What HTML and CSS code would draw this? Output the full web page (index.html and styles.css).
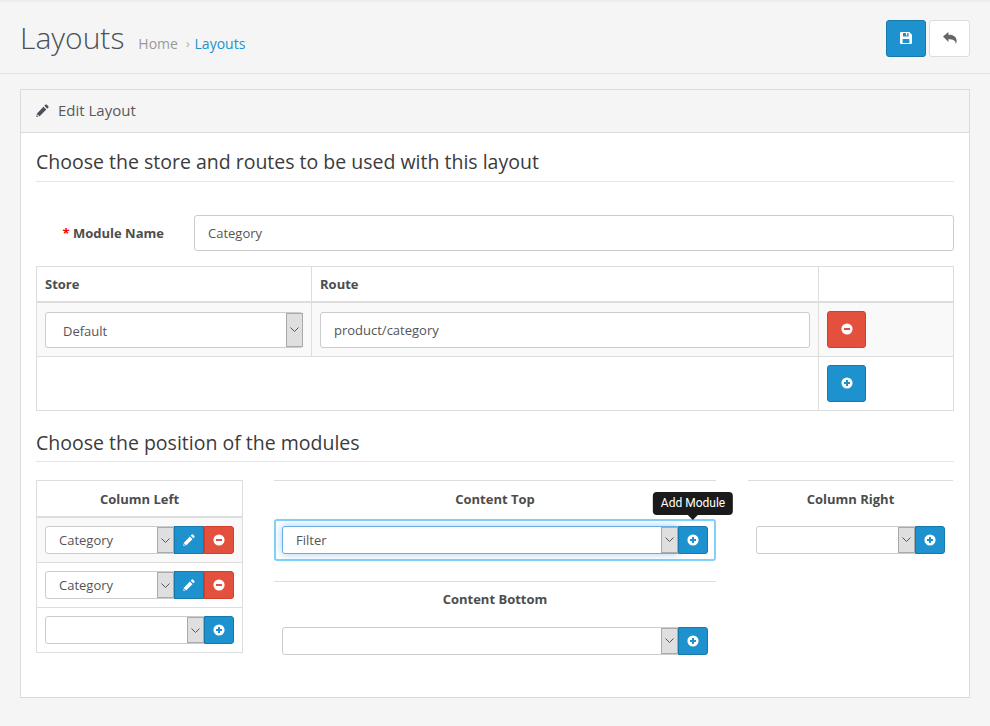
FILE: index.html
```html
<!DOCTYPE html>
<html lang="en">
<head>
    <meta charset="UTF-8">
    <meta name="viewport" content="width=device-width, initial-scale=1.0">
    <title>Layouts</title>
    <link rel="stylesheet" href="styles.css">
</head>
<body>
    <!-- icon set -->
    <svg class="icon-defs" width="0" height="0" aria-hidden="true">
        <symbol id="i-pencil" viewBox="0 0 14 14">
            <path fill-rule="evenodd" d="M10.200.7a1 1 0 0 1 1.400 0l1.700 1.700a1 1 0 0 1 0 1.400l-1.200 1.200-3.100-3.100zM8 2.900l3.100 3.100-7.200 7.200-3.600.8.800-3.700zM1.700 11l-.3 1.600 1 1 1.300-.3-1.100-1.100z"/>
        </symbol>
        <symbol id="i-plus" viewBox="0 0 12 12">
            <path fill-rule="evenodd" d="M6 .4a5.600 5.600 0 1 1 0 11.200A5.600 5.600 0 0 1 6 .4zM5 3v2H3v2h2v2h2V7h2V5H7V3z"/>
        </symbol>
        <symbol id="i-minus" viewBox="0 0 12 12">
            <path fill-rule="evenodd" d="M6 .4a5.600 5.600 0 1 1 0 11.200A5.600 5.600 0 0 1 6 .4zM3 5v2h6V5z"/>
        </symbol>
        <symbol id="i-save" viewBox="0 0 12 12">
            <path fill-rule="evenodd" d="M1 0h8.300L12 2.700V11a1 1 0 0 1-1 1H1a1 1 0 0 1-1-1V1a1 1 0 0 1 1-1zm2 1v3.400h5.600V1H7.200v2.400H6V1zM2.600 7v4h6.800V7z"/>
        </symbol>
        <symbol id="i-reply" viewBox="0 0 14 12">
            <path d="M0 4.600 5.400 0v2.700c4.600 0 8.200 1.600 8.200 6.300 0 1.200-.4 2.200-.9 3 .2-3.600-2.600-4.800-7.300-4.800v2.900z"/>
        </symbol>
        <symbol id="i-chevron" viewBox="0 0 9 5">
            <path d="M.5.5 4.500 4.500 8.500.5" fill="none" stroke="currentColor" stroke-width="1"/>
        </symbol>
    </svg>

    <header class="page-header">
        <h1>Layouts</h1>
        <ul class="breadcrumb">
            <li><a href="#">Home</a></li>
            <li class="sep">›</li>
            <li><a href="#" class="current">Layouts</a></li>
        </ul>
        <div class="header-actions">
            <button class="btn btn-primary btn-big" type="button"><svg class="ico"><use href="#i-save"/></svg></button>
            <button class="btn btn-default btn-big" type="button"><svg class="ico ico-reply"><use href="#i-reply"/></svg></button>
        </div>
    </header>

    <main class="panel">
        <div class="panel-heading">
            <svg class="ico"><use href="#i-pencil"/></svg>
            <span>Edit Layout</span>
        </div>
        <div class="panel-body">
            <h3 class="legend">Choose the store and routes to be used with this layout</h3>

            <div class="form-row">
                <label for="name"><span class="required">*</span> Module Name</label>
                <input type="text" id="name" class="field" value="Category">
            </div>

            <table class="route-table">
                <thead>
                    <tr><th class="col-store">Store</th><th>Route</th><th class="col-action"></th></tr>
                </thead>
                <tbody>
                    <tr class="striped">
                        <td>
                            <div class="select big">
                                <select class="store-select"><option>Default</option></select>
                                <span class="arrow"><svg><use href="#i-chevron"/></svg></span>
                            </div>
                        </td>
                        <td><input type="text" class="field route-field" value="product/category"></td>
                        <td><button class="btn btn-danger btn-big" type="button"><svg class="ico"><use href="#i-minus"/></svg></button></td>
                    </tr>
                    <tr>
                        <td colspan="2"></td>
                        <td><button class="btn btn-primary btn-big" type="button"><svg class="ico"><use href="#i-plus"/></svg></button></td>
                    </tr>
                </tbody>
            </table>

            <h3 class="legend legend-2">Choose the position of the modules</h3>

            <div class="positions">
                <table class="module-table">
                    <thead><tr><th>Column Left</th></tr></thead>
                    <tbody>
                        <tr class="striped"><td>
                            <div class="group">
                                <div class="select"><select><option>Category</option></select><span class="arrow"><svg><use href="#i-chevron"/></svg></span></div>
                                <button class="btn btn-primary" type="button"><svg class="ico"><use href="#i-pencil"/></svg></button>
                                <button class="btn btn-danger" type="button"><svg class="ico"><use href="#i-minus"/></svg></button>
                            </div>
                        </td></tr>
                        <tr><td>
                            <div class="group">
                                <div class="select"><select><option>Category</option></select><span class="arrow"><svg><use href="#i-chevron"/></svg></span></div>
                                <button class="btn btn-primary" type="button"><svg class="ico"><use href="#i-pencil"/></svg></button>
                                <button class="btn btn-danger" type="button"><svg class="ico"><use href="#i-minus"/></svg></button>
                            </div>
                        </td></tr>
                        <tr><td>
                            <div class="group">
                                <div class="select"><select><option></option></select><span class="arrow"><svg><use href="#i-chevron"/></svg></span></div>
                                <button class="btn btn-primary" type="button"><svg class="ico"><use href="#i-plus"/></svg></button>
                            </div>
                        </td></tr>
                    </tbody>
                </table>

                <div class="center-col">
                    <section class="open-block">
                        <h4>Content Top</h4>
                        <div class="focus-row">
                            <div class="group">
                                <div class="select focused"><select><option>Filter</option></select><span class="arrow"><svg><use href="#i-chevron"/></svg></span></div>
                                <div class="tip-anchor">
                                    <button class="btn btn-primary" type="button"><svg class="ico"><use href="#i-plus"/></svg></button>
                                    <div class="tooltip">Add Module</div>
                                </div>
                            </div>
                        </div>
                    </section>
                    <section class="open-block bottom-block">
                        <h4>Content Bottom</h4>
                        <div class="plain-row">
                            <div class="group">
                                <div class="select"><select><option></option></select><span class="arrow"><svg><use href="#i-chevron"/></svg></span></div>
                                <button class="btn btn-primary" type="button"><svg class="ico"><use href="#i-plus"/></svg></button>
                            </div>
                        </div>
                    </section>
                </div>

                <section class="open-block right-col">
                    <h4>Column Right</h4>
                    <div class="plain-row">
                        <div class="group">
                            <div class="select"><select><option></option></select><span class="arrow"><svg><use href="#i-chevron"/></svg></span></div>
                            <button class="btn btn-primary" type="button"><svg class="ico"><use href="#i-plus"/></svg></button>
                        </div>
                    </div>
                </section>
            </div>
        </div>
    </main>
</body>
</html>
```

FILE: styles.css
```css
* {
    box-sizing: border-box;
}
html, body {
    height: 100%;
}
body {
    margin: 0;
    background: #f5f5f5;
    border-top: 2px solid #ececec;
    font-family: "Open Sans", sans-serif;
    font-size: 13px;
    color: #555;
}
.icon-defs {
    position: absolute;
}

/* header */
.page-header {
    display: flex;
    align-items: center;
    height: 72px;
    padding: 0 20px 0 20px;
    border-bottom: 1px solid #e3e3e3;
}
.page-header h1 {
    margin: 0;
    font-size: 30px;
    font-weight: 300;
    color: #4a5058;
    line-height: 1;
    padding-top: 1px;
}
.breadcrumb {
    display: flex;
    align-items: center;
    list-style: none;
    margin: 12px 0 0 14px;
    padding: 0;
    font-size: 14px;
}
.breadcrumb a {
    color: #999;
    text-decoration: none;
}
.breadcrumb a.current {
    color: #1e91cf;
}
.breadcrumb .sep {
    color: #aaa;
    margin: 0 5px 0 8px;
    font-size: 12px;
}
.header-actions {
    display: flex;
    gap: 3px;
    margin-left: auto;
    margin-top: 1px;
}

/* buttons */
.btn {
    display: flex;
    align-items: center;
    justify-content: center;
    width: 30px;
    height: 28px;
    padding: 0;
    border: 1px solid;
    border-radius: 0;
    color: #fff;
    cursor: pointer;
}
.group > .btn:last-child,
.tip-anchor .btn {
    border-radius: 0 3px 3px 0;
}
.btn-big {
    width: 39px;
    height: 37px;
    border-radius: 3px;
}
.header-actions .btn-big {
    width: 40px;
}
.header-actions .btn-default {
    width: 41px;
}
.btn-primary {
    background: #1e91cf;
    border-color: #1978ab;
}
.btn-danger {
    background: #e3503e;
    border-color: #d43f2c;
}
.btn-default {
    background: #fff;
    border-color: #ddd;
    color: #666;
}
.ico {
    width: 12px;
    height: 12px;
    fill: currentColor;
}
.ico-reply {
    width: 14px;
}

/* panel */
.panel {
    margin: 15px 20px 0;
    height: 609px;
    background: #fff;
    border: 1px solid #dbdbdb;
}
.panel-heading {
    display: flex;
    align-items: center;
    gap: 9px;
    height: 43px;
    padding: 0 15px 2px;
    background: #f5f5f5;
    border-bottom: 1px solid #dbdbdb;
    font-size: 15px;
    color: #595959;
}
.panel-heading .ico {
    width: 13px;
    height: 13px;
    color: #4a5058;
}
.panel-body {
    padding: 15px;
}
.legend {
    margin: 0;
    height: 34px;
    border-bottom: 1px solid #e5e5e5;
    font-size: 19.5px;
    font-weight: 400;
    line-height: 28px;
    color: #3b3b3b;
}
.legend-2 {
    margin-top: 17px;
    padding-top: 1px;
}

/* name row */
.form-row {
    display: flex;
    align-items: center;
    margin-top: 33px;
    margin-bottom: 15px;
}
.form-row label {
    width: 158px;
    padding-right: 30px;
    text-align: right;
    font-weight: 700;
    color: #4d4d4d;
    white-space: nowrap;
    flex-shrink: 0;
}
.required {
    color: #f00;
}
.field {
    display: block;
    width: 100%;
    height: 36px;
    padding: 0 13px;
    border: 1px solid #ccc;
    border-radius: 3px;
    background: #fff;
    font: 13px "Open Sans", sans-serif;
    color: #555;
}
.route-field {
    margin-top: 1px;
}

/* tables */
table {
    border-collapse: collapse;
    width: 100%;
}
th, td {
    border: 1px solid #ddd;
    padding: 8px;
}
th {
    height: 37px;
    border-bottom: 2px solid #ddd;
    padding: 0 8px;
    font-weight: 700;
    text-align: left;
    color: #4d4d4d;
}
.striped td {
    background: #f9f9f9;
}
.route-table {
    table-layout: fixed;
}
.route-table th {
    height: 35px;
}
.col-store {
    width: 275px;
}
.col-action {
    width: 135px;
}

/* selects */
.select {
    position: relative;
    flex: 1;
    min-width: 0;
    height: 28px;
}
.select select {
    display: block;
    width: 100%;
    height: 100%;
    padding: 0 20px 0 13px;
    border: 1px solid #ccc;
    border-radius: 3px 0 0 3px;
    background: #fff;
    font: 13px "Open Sans", sans-serif;
    color: #555;
    appearance: none;
}
.select.big {
    height: 36px;
    margin-top: 1px;
}
.select.big select {
    padding: 2px 20px 0 17px;
    border-radius: 3px;
}
.select .arrow {
    position: absolute;
    top: 1px;
    right: 0;
    bottom: 1px;
    width: 17px;
    display: flex;
    align-items: center;
    justify-content: center;
    background: #dfdfdf;
    border: 1px solid #aaa;
    color: #555;
    pointer-events: none;
}
.select .arrow svg {
    width: 9px;
    height: 5px;
}
.select.focused select {
    border-color: #66afe9;
    box-shadow: 0 0 8px rgba(102, 175, 233, .6);
}
.group {
    display: flex;
}

/* module position columns */
.positions {
    display: grid;
    grid-template-columns: 207px 442px 206px;
    column-gap: 31px;
    align-items: start;
    margin-top: 18px;
}
.right-col {
    margin-left: 1px;
}
.module-table th {
    padding-top: 2px;
    text-align: center;
}
.open-block {
    border-top: 1px solid #ddd;
}
.open-block h4 {
    margin: 0;
    height: 38px;
    font-size: 13px;
    font-weight: 700;
    line-height: 37px;
    text-align: center;
    color: #4d4d4d;
}
.plain-row {
    padding: 7px 8px 6px;
}
.focus-row {
    padding: 5px 6px;
    border: 2px solid #80d0fb;
    border-radius: 3px;
}
.bottom-block {
    margin-top: 20px;
}
.bottom-block h4 {
    line-height: 35px;
}

/* tooltip */
.tip-anchor {
    position: relative;
}
.tooltip {
    position: absolute;
    bottom: 100%;
    left: 50%;
    transform: translateX(-50%);
    margin-bottom: 11px;
    padding: 0 8px;
    height: 23px;
    border-radius: 4px;
    background: #1a1a1a;
    font: 12px/23px Roboto, sans-serif;
    color: #fff;
    white-space: nowrap;
}
.tooltip::after {
    content: "";
    position: absolute;
    top: 100%;
    left: 50%;
    margin-left: -5px;
    border: 5px solid transparent;
    border-bottom: 0;
    border-top-color: #1a1a1a;
}
```
